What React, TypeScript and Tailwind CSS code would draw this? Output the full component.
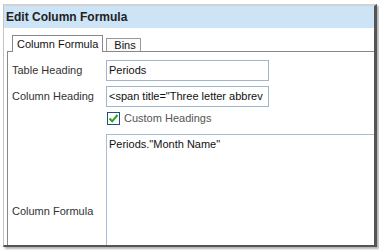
import React from "react";

const font = { fontFamily: '"Liberation Sans", Arial, sans-serif' };

function Field({ label, value }: { label: string; value: string }) {
  return (
    <div className="flex items-center">
      <span className="w-[94px] shrink-0 text-[11px] text-[#333]">{label}</span>
      <div className="flex h-[21px] w-[163px] items-center overflow-hidden whitespace-nowrap border border-[#9fb6cf] bg-white pl-[2px] text-[11px] text-[#111]">
        {value}
      </div>
    </div>
  );
}

export default function App() {
  return (
    <div className="h-[250px] w-[379px] overflow-hidden bg-white pl-[3px] pt-[4px]" style={font}>
      <div className="flex h-[243px] w-[374px] flex-col border-b-2 border-l border-r-[3px] border-t-2 border-b-[#555] border-l-[#c4c4c4] border-r-[#555] border-t-[#d2d2d2] shadow-[2px_2px_2px_rgba(0,0,0,0.3)]">
        <div className="flex h-[22px] shrink-0 items-center bg-[#cce4f5] pl-[2px] text-[12px] font-bold text-[#222]">
          Edit Column Formula
        </div>
        <div className="flex flex-1 flex-col bg-white pl-[3px] pt-[7px]">
          <div className="relative z-10 flex items-end gap-[3px] pl-[5px]">
            <div className="-mb-px flex h-[17px] items-center border border-b-0 border-[#888] bg-white px-[4px] text-[11px] text-[#111]">
              Column Formula
            </div>
            <div className="flex h-[13px] items-center border border-b-0 border-[#999] bg-[#fafafa] pl-[7px] pr-[4px] text-[11px] text-[#111]">
              Bins
            </div>
          </div>
          <div className="flex flex-1 flex-col border-l border-t border-[#888] pt-[8px]">
            <div className="flex flex-col gap-[5px] pl-[4px]">
              <Field label="Table Heading" value="Periods" />
              <Field label="Column Heading" value={'<span title="Three letter abbrev'} />
            </div>
            <div className="ml-[99px] mt-[3px] flex items-center gap-[4px]">
              <div className="flex h-[13px] w-[13px] items-center justify-center border border-[#1f4f7e] bg-white">
                <svg width="11" height="11" viewBox="0 0 11 11">
                  <path d="M1.5 5.5 L4.2 8.3 L9.5 2" fill="none" stroke="#25a525" strokeWidth="2" />
                </svg>
              </div>
              <span className="text-[11px] text-[#555]">Custom Headings</span>
            </div>
            <div className="mt-[7px] flex flex-1">
              <span className="w-[98px] shrink-0 pl-[4px] pt-[69px] text-[11px] text-[#333]">
                Column Formula
              </span>
              <div className="flex-1 border-l border-t border-[#a7bdd5] pl-[2px] pt-[1px] text-[11px] text-[#111]">
                Periods."Month Name"
              </div>
            </div>
          </div>
        </div>
      </div>
    </div>
  );
}
